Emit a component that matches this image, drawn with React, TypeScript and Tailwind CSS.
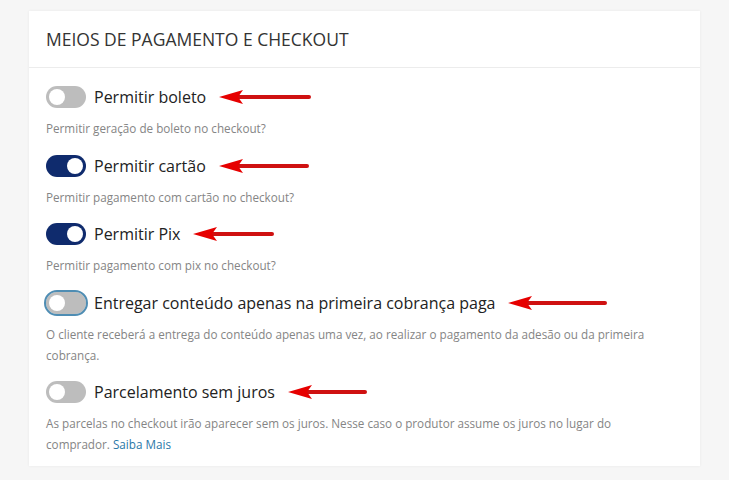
import { FC, ReactNode } from "react";

interface ToggleProps {
  on?: boolean;
  focused?: boolean;
}

const Toggle: FC<ToggleProps> = ({ on, focused }) => (
  <span
    className={`relative inline-flex h-[22px] w-[40px] shrink-0 items-center rounded-full ${
      on ? "bg-[#0f2b6d]" : "bg-[#bdbdbd]"
    } ${focused ? "outline-2 outline-[#4f8db3]" : ""}`}
  >
    <span
      className={`absolute top-[3px] h-[16px] w-[16px] rounded-full bg-white ${
        on ? "left-[21px]" : "left-[3px]"
      }`}
    />
  </span>
);

// red annotation arrow pointing back at the label
const Arrow: FC<{ width: number }> = ({ width }) => (
  <svg width={width} height="16" viewBox={`0 0 ${width} 16`} className="ml-[13px] shrink-0">
    <line x1="18" y1="8" x2={width - 3} y2="8" stroke="#cf1111" strokeWidth="4" strokeLinecap="round" />
    <path d="M0 8 L24 1 L19 8 L24 15 Z" fill="#e60000" />
  </svg>
);

interface OptionProps {
  label: string;
  arrow: number;
  on?: boolean;
  focused?: boolean;
  children: ReactNode;
}

const Option: FC<OptionProps> = ({ label, arrow, on, focused, children }) => (
  <div className="mb-[15.5px] last:mb-0">
    <div className="flex h-[22px] items-center">
      <Toggle on={on} focused={focused} />
      <span className="ml-[8px] text-[16px] text-[#222]">{label}</span>
      <Arrow width={arrow} />
    </div>
    <p className="mt-[10px] max-w-[629px] text-[11.7px] leading-[21px] text-[#858585]">{children}</p>
  </div>
);

export default function App() {
  return (
    <div
      className="min-h-[480px] w-full bg-[#f6f6f6] px-[29px] pt-[11px]"
      style={{ fontFamily: '"Open Sans", "Liberation Sans", sans-serif' }}
    >
      <div className="w-[671px] bg-white shadow-[0_0_3px_rgba(0,0,0,0.06)]">
        <div className="border-b border-[#ececec] px-[17px] py-[16px]">
          <h2 className="text-[17.5px] leading-[24px] text-[#333]">MEIOS DE PAGAMENTO E CHECKOUT</h2>
        </div>
        <div className="px-[17px] pt-[18px] pb-[11px]">
          <Option label="Permitir boleto" arrow={93}>
            Permitir geração de boleto no checkout?
          </Option>
          <Option label="Permitir cartão" arrow={91} on>
            Permitir pagamento com cartão no checkout?
          </Option>
          <Option label="Permitir Pix" arrow={82} on>
            Permitir pagamento com pix no checkout?
          </Option>
          <Option label="Entregar conteúdo apenas na primeira cobrança paga" arrow={100} focused>
            O cliente receberá a entrega do conteúdo apenas uma vez, ao realizar o pagamento da adesão ou da primeira
            cobrança.
          </Option>
          <Option label="Parcelamento sem juros" arrow={80}>
            As parcelas no checkout irão aparecer sem os juros. Nesse caso o produtor assume os juros no lugar do
            comprador. <span className="text-[#2b78a8]">Saiba Mais</span>
          </Option>
        </div>
      </div>
    </div>
  );
}
